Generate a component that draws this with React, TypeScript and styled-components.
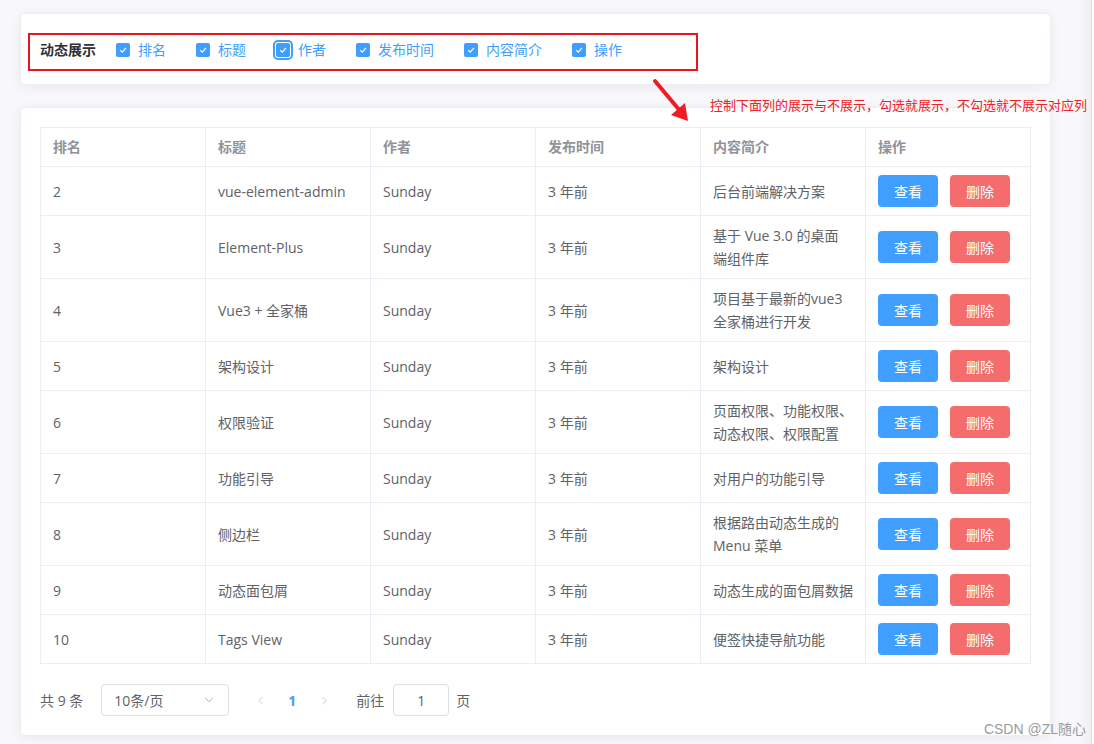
import React from "react";
import styled, { createGlobalStyle } from "styled-components";
import { ChevronDown, ChevronLeft, ChevronRight } from "lucide-react";

const GlobalStyle = createGlobalStyle`
  html, body {
    margin: 0;
    padding: 0;
    background: #ffffff;
  }
  body {
    font-family: "Open Sans", "Noto Sans CJK SC", sans-serif;
    font-size: 14px;
    color: #606266;
  }
  * {
    box-sizing: border-box;
  }
`;

const columns = ["排名", "标题", "作者", "发布时间", "内容简介", "操作"];

const rows = [
  { rank: 2, title: "vue-element-admin", desc: "后台前端解决方案" },
  { rank: 3, title: "Element-Plus", desc: "基于 Vue 3.0 的桌面\n端组件库" },
  { rank: 4, title: "Vue3 + 全家桶", desc: "项目基于最新的vue3全家桶进行开发" },
  { rank: 5, title: "架构设计", desc: "架构设计" },
  { rank: 6, title: "权限验证", desc: "页面权限、功能权限、动态权限、权限配置" },
  { rank: 7, title: "功能引导", desc: "对用户的功能引导" },
  { rank: 8, title: "侧边栏", desc: "根据路由动态生成的 Menu 菜单" },
  { rank: 9, title: "动态面包屑", desc: "动态生成的面包屑数据" },
  { rank: 10, title: "Tags View", desc: "便签快捷导航功能" },
];

export default function App() {
  return (
    <Page>
      <GlobalStyle />
      <Main>
        <Card>
          <FilterFrame>
            <FilterLabel>动态展示</FilterLabel>
            {columns.map((c) => (
              <CheckItem key={c}>
                <CheckBox $focused={c === "作者"}>
                  <svg width="10" height="10" viewBox="0 0 10 10">
                    <path
                      d="M2.2 5.2 L4.2 7.2 L8 2.8"
                      fill="none"
                      stroke="#fff"
                      strokeWidth="1.2"
                    />
                  </svg>
                </CheckBox>
                <CheckText>{c}</CheckText>
              </CheckItem>
            ))}
          </FilterFrame>
        </Card>

        <TableCard>
          <Table>
            <thead>
              <tr>
                {columns.map((c) => (
                  <Th key={c}>{c}</Th>
                ))}
              </tr>
            </thead>
            <tbody>
              {rows.map((r) => (
                <tr key={r.rank}>
                  <Td>{r.rank}</Td>
                  <Td>{r.title}</Td>
                  <Td>Sunday</Td>
                  <Td>3 年前</Td>
                  <Td>{r.desc}</Td>
                  <Td>
                    <Actions>
                      <Button $kind="primary">查看</Button>
                      <Button $kind="danger">删除</Button>
                    </Actions>
                  </Td>
                </tr>
              ))}
            </tbody>
          </Table>

          <Pagination>
            <Total>共 9 条</Total>
            <Select>
              <span>10条/页</span>
              <ChevronDown size={14} color="#a8abb2" strokeWidth={1.6} />
            </Select>
            <PageBtn>
              <ChevronLeft size={13} color="#c0c4cc" strokeWidth={1.6} />
            </PageBtn>
            <PageNum>1</PageNum>
            <PageBtn>
              <ChevronRight size={13} color="#c0c4cc" strokeWidth={1.6} />
            </PageBtn>
            <Jumper>
              前往
              <JumpInput>1</JumpInput>
              页
            </Jumper>
          </Pagination>
        </TableCard>

        <Arrow width="48" height="50" viewBox="0 0 48 50">
          <line x1="8" y1="5" x2="34" y2="36" stroke="#ee1c25" strokeWidth="4" strokeLinecap="round" />
          <polygon points="41,45 24,39 38,27" fill="#ee1c25" />
        </Arrow>
        <Note>控制下面列的展示与不展示，勾选就展示，不勾选就不展示对应列</Note>
        <Watermark>CSDN @ZL随心</Watermark>
      </Main>
      <RightEdge />
    </Page>
  );
}

const Page = styled.div`
  position: relative;
  display: flex;
  width: 1094px;
  height: 744px;
  overflow: hidden;
`;

const Main = styled.div`
  position: relative;
  width: 1091px;
  padding: 13px 40px 0 20px;
  background: linear-gradient(to right, #f8f8fa calc(100% - 12px), #efeff2);
`;

const RightEdge = styled.div`
  width: 3px;
  border-left: 1px solid #dcdde0;
  background: #ffffff;
`;

const Card = styled.div`
  background: #ffffff;
  border: 1px solid #ebeef5;
  border-radius: 4px;
  box-shadow: 0 2px 12px 0 rgba(0, 0, 0, 0.06);
  padding: 19px 7px 13px;
`;

const FilterFrame = styled.div`
  display: flex;
  align-items: center;
  width: 670px;
  height: 38px;
  border: 2px solid #e8151f;
  padding: 0 0 5px 10px;
`;

const FilterLabel = styled.span`
  font-weight: 700;
  font-size: 14px;
  line-height: 20px;
  color: #303133;
  margin-right: 20px;
`;

const CheckItem = styled.label`
  display: flex;
  align-items: center;
  margin-right: 30px;
`;

const CheckBox = styled.span<{ $focused?: boolean }>`
  display: flex;
  align-items: center;
  justify-content: center;
  width: 14px;
  height: 14px;
  border-radius: 2px;
  background: #409eff;
  outline: ${(p) => (p.$focused ? "2px solid #409eff" : "none")};
  outline-offset: 1px;
`;

const CheckText = styled.span`
  padding-left: 8px;
  font-size: 14px;
  line-height: 20px;
  color: #409eff;
`;

const TableCard = styled(Card)`
  margin-top: 22px;
  padding: 19px 19px 19px;
`;

const Table = styled.table`
  width: 991px;
  border-collapse: collapse;
  table-layout: fixed;
`;

const Th = styled.th`
  width: 165px;
  border: 1px solid #ebeef5;
  padding: 8px 12px;
  line-height: 22px;
  font-size: 14px;
  font-weight: 700;
  color: #909399;
  text-align: left;
`;

const Td = styled.td`
  border: 1px solid #ebeef5;
  padding: 8px 12px;
  line-height: 23px;
  font-size: 14px;
  color: #606266;
  vertical-align: middle;
  white-space: pre-line;
  word-break: break-all;
`;

const Actions = styled.div`
  display: flex;
  gap: 12px;
`;

const Button = styled.button<{ $kind: "primary" | "danger" }>`
  width: 60px;
  height: 32px;
  border: none;
  border-radius: 4px;
  font-family: inherit;
  font-size: 14px;
  color: #ffffff;
  background: ${(p) => (p.$kind === "primary" ? "#409eff" : "#f56c6c")};
  padding: 0;
`;

const Pagination = styled.div`
  display: flex;
  align-items: center;
  margin-top: 20px;
  height: 32px;
  font-size: 14px;
  color: #606266;
`;

const Total = styled.span`
  margin-right: 18px;
`;

const Select = styled.div`
  display: flex;
  align-items: center;
  justify-content: space-between;
  width: 128px;
  height: 32px;
  padding: 0 12px 0 12px;
  border: 1px solid #dcdfe6;
  border-radius: 4px;
  margin-right: 15px;
`;

const PageBtn = styled.span`
  display: flex;
  align-items: center;
  justify-content: center;
  width: 32px;
  height: 32px;
`;

const PageNum = styled.span`
  width: 32px;
  text-align: center;
  font-weight: 700;
  color: #409eff;
`;

const Jumper = styled.span`
  display: flex;
  align-items: center;
  gap: 9px;
  margin-left: 16px;
`;

const JumpInput = styled.span`
  display: flex;
  align-items: center;
  justify-content: center;
  width: 56px;
  height: 32px;
  border: 1px solid #dcdfe6;
  border-radius: 4px;
  margin-right: -2px;
`;

const Arrow = styled.svg`
  position: absolute;
  left: 647px;
  top: 76px;
`;

const Note = styled.div`
  position: absolute;
  left: 710px;
  top: 96px;
  font-size: 13px;
  line-height: 18px;
  color: #f0202a;
  white-space: nowrap;
`;

const Watermark = styled.div`
  position: absolute;
  right: 5px;
  bottom: 6px;
  font-size: 14px;
  line-height: 18px;
  color: #9b9b9b;
  font-family: "Liberation Sans", "Noto Sans CJK SC", sans-serif;
`;
